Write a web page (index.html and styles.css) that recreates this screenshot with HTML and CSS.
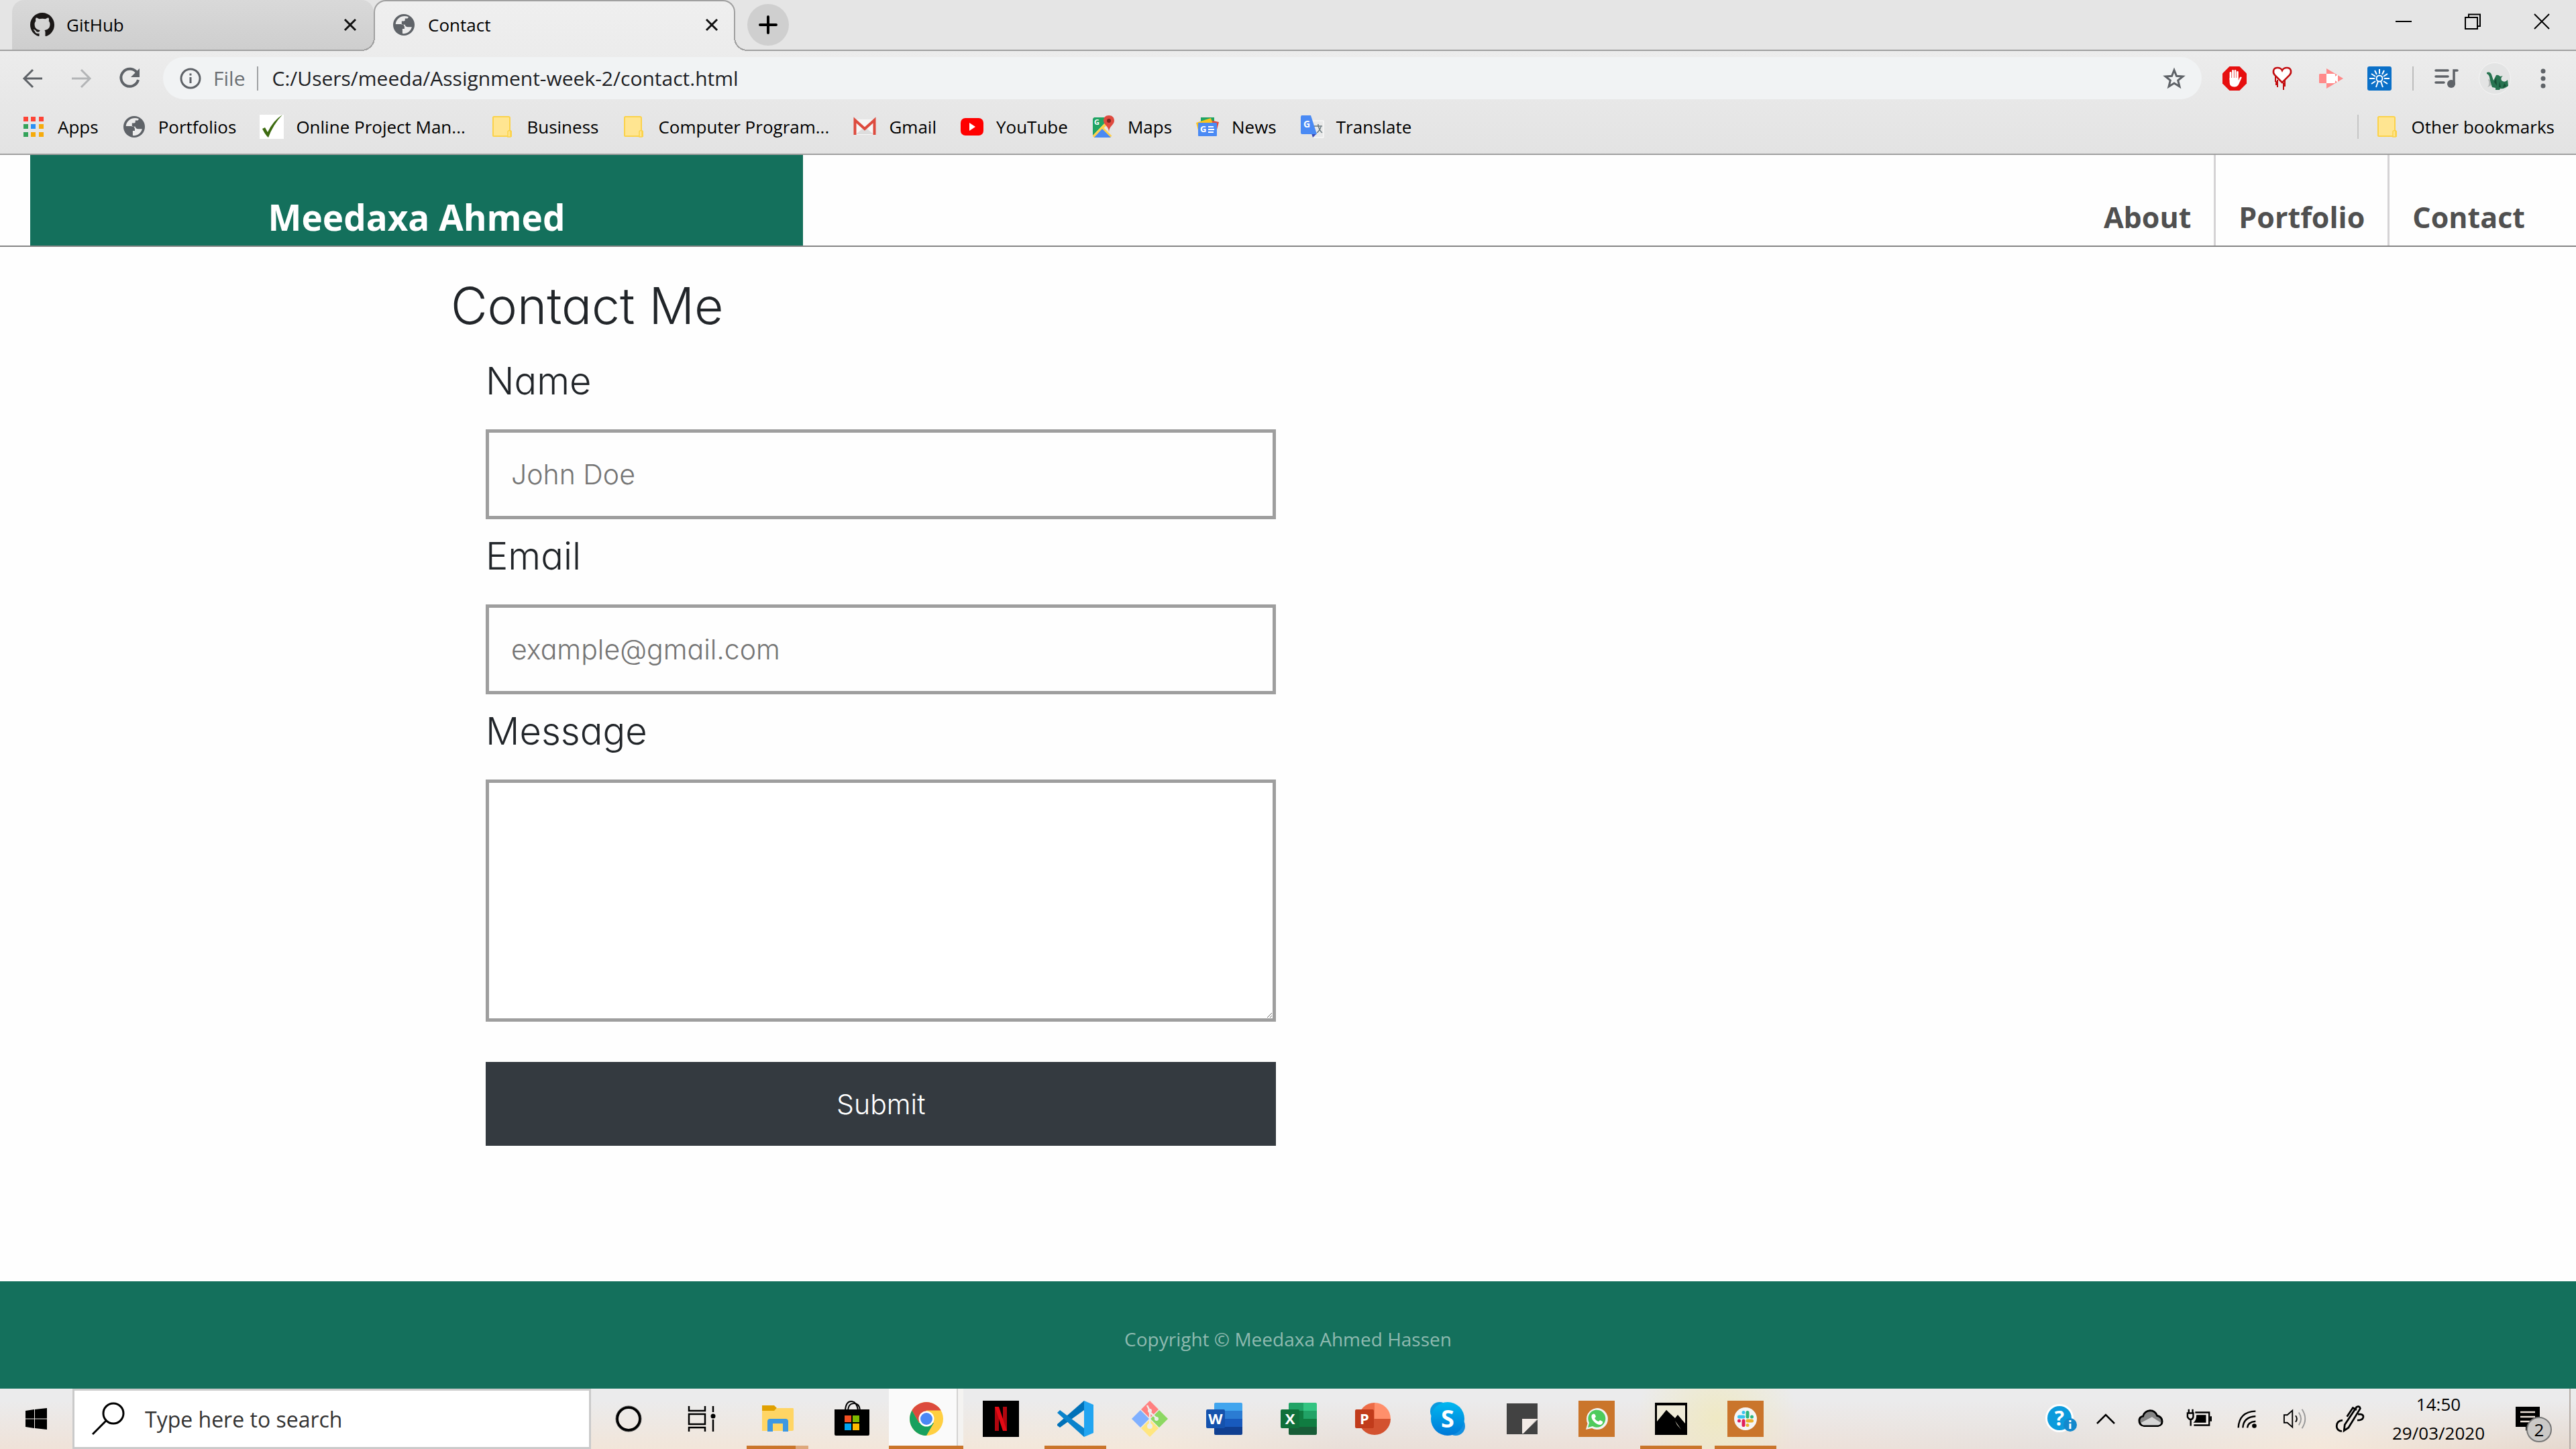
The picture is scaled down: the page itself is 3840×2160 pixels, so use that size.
FILE: index.html
```html
<!DOCTYPE html>
<html lang="en">
<head>
<meta charset="utf-8">
<title>Contact</title>
<link rel="stylesheet" href="styles.css">
</head>
<body>
<svg class="defs" aria-hidden="true">
  <symbol id="globe" viewBox="2 2 20 20"><circle cx="12" cy="12" r="10" fill="#5f6368"/><path fill="#ececec" d="M4.3 11.4h4.9c2.2 0 3.400 1 3.400 2.800v1.500h-1.900v4.500c3.500.6 8-2.200 8.700-6.200h-3.700c-1.500 0-2.600-.8-2.600-2.200H10V8.500h1.900c.9 0 1.200-.5 1.200-1.200V6.100h2.400l.9-1.400C11.500 2.300 4.900 5.200 4.300 11.400z"/></symbol>
  <symbol id="folder" viewBox="0 0 36 36"><path fill="#ffe591" stroke="#fbd24a" stroke-width="2" d="M5 3h22q2 0 2 2v18l2 2v7H5q-1 0-1-1V4z"/><path fill="#ffe591" stroke="#fbd24a" stroke-width="1.500" d="M26 33v-8q2-3 4 0v8z"/></symbol>
  <symbol id="close" viewBox="0 0 20 20"><path stroke="#111" stroke-width="3" d="M2 2l16 16M18 2L2 18"/></symbol>
</svg>

<div class="browser">
  <div class="tabs">
    <div class="tab">
      <svg class="icon" viewBox="0 0 16 16"><path fill="#1b1817" d="M8 0C3.580 0 0 3.580 0 8c0 3.540 2.290 6.530 5.470 7.590.4.070.55-.17.55-.38 0-.19-.01-.82-.01-1.490-2.010.37-2.530-.49-2.690-.94-.09-.23-.48-.94-.82-1.130-.28-.15-.68-.52-.01-.53.63-.01 1.080.58 1.230.82.72 1.210 1.870.87 2.330.66.070-.52.28-.87.51-1.070-1.780-.2-3.640-.89-3.640-3.950 0-.87.31-1.590.82-2.150-.08-.2-.36-1.020.08-2.120 0 0 .67-.21 2.200.82.64-.18 1.320-.27 2-.27s1.360.09 2 .27c1.530-1.040 2.200-.82 2.200-.82.44 1.100.16 1.920.08 2.120.51.56.82 1.270.82 2.150 0 3.070-1.870 3.750-3.650 3.950.29.25.54.73.54 1.480 0 1.070-.01 1.930-.01 2.200 0 .21.15.46.55.38A8.010 8.010 0 0016 8c0-4.420-3.580-8-8-8z"/></svg>
      <span class="tab-title">GitHub</span>
      <button class="tab-close" aria-label="Close GitHub"><svg><use href="#close"/></svg></button>
    </div>
    <div class="tab active">
      <svg class="icon"><use href="#globe" x="2" y="2" width="32" height="32"/></svg>
      <span class="tab-title">Contact</span>
      <button class="tab-close" aria-label="Close Contact"><svg><use href="#close"/></svg></button>
    </div>
    <button class="new-tab" aria-label="New tab"><svg viewBox="0 0 28 28"><path stroke="#000" stroke-width="4" stroke-linecap="round" d="M14 2v24M2 14h24"/></svg></button>
    <div class="window-controls">
      <button aria-label="Minimize"><svg viewBox="0 0 24 24"><path stroke="#000" stroke-width="2" d="M0 12h24"/></svg></button>
      <button aria-label="Restore"><svg viewBox="0 0 24 24"><path fill="none" stroke="#000" stroke-width="2" d="M1 6h18v17H1zM6 6V1.500h17V19h-4"/></svg></button>
      <button aria-label="Close"><svg viewBox="0 0 24 24"><path stroke="#000" stroke-width="2" d="M1 1l22 22M23 1L1 23"/></svg></button>
    </div>
  </div>

  <div class="toolbar">
    <button class="tool" aria-label="Back"><svg viewBox="0 0 36 36"><path fill="none" stroke="#5f6368" stroke-width="3" d="M32 18H5M18 5L5 18l13 13"/></svg></button>
    <button class="tool" aria-label="Forward"><svg viewBox="0 0 36 36"><path fill="none" stroke="#b3b5b7" stroke-width="3" d="M4 18h27M18 5l13 13-13 13"/></svg></button>
    <button class="tool" aria-label="Reload"><svg viewBox="0 0 36 36"><path fill="none" stroke="#5f6368" stroke-width="4" d="M29.500 10A13 13 0 1 0 31 20"/><path fill="#5f6368" d="M33 3v13H20z"/></svg></button>
    <div class="omnibox">
      <svg class="info" viewBox="0 0 32 32"><circle cx="16" cy="16" r="14" fill="none" stroke="#5f6368" stroke-width="3"/><path stroke="#5f6368" stroke-width="3" d="M16 14v9M16 8.500v3"/></svg>
      <label class="scheme" for="url">File</label>
      <input id="url" class="url" type="text" value="C:/Users/meeda/Assignment-week-2/contact.html">
      <button class="star" aria-label="Bookmark this page"><svg viewBox="0 0 34 34"><path fill="none" stroke="#5f6368" stroke-width="3" d="M17 4.500l3.500 8.700 9.500.7-7.300 6 2.300 9.100-8-5-8 5 2.300-9.100-7.300-6 9.500-.7z"/></svg></button>
    </div>
    <button class="tool" aria-label="Ad blocker"><svg viewBox="0 0 36 36"><path fill="#e60f0f" d="M10.500 0h15L36 10.500v15L25.500 36h-15L0 25.500v-15z"/><path fill="none" stroke="#fff" stroke-width="2.800" stroke-linecap="round" d="M12 20V9.500M15.500 18V6.500M19 18V6.300M22.400 18V8.500"/><path fill="#fff" d="M10.600 17h13.200v4l2-4.500q1.500-2 3 0L24.500 26q-2 4.500-7 4.500-6.900 0-6.900-7z"/></svg></button>
    <button class="tool" aria-label="Heart extension"><svg viewBox="0 0 36 36"><path fill="#c20d10" d="M6 15h2v7h2v6H7v-5H6zM9 20h2v11H9zM18 24h2v11h-2zM20 20h2v10h-2z"/><path fill="#fff" stroke="#c20d10" stroke-width="2.600" d="M17 24L6 13C2 8 4 2 10 2q5 0 7 4 2-4 7-4c6 0 8 6 4 11z"/></svg></button>
    <button class="tool" aria-label="Video extension"><svg viewBox="0 0 36 36"><path fill="#ff8a8a" d="M1 11h10V3l25 15-25 15v-8H1q-1 0-1-1V12z"/><path fill="#fff" d="M11 11h12q1 0 1 2v2l4-3v12l-4-3v2q0 2-1 2H11z"/></svg></button>
    <button class="tool" aria-label="Password manager"><svg viewBox="0 0 36 36"><rect width="36" height="36" rx="3" fill="#0a70c8"/><g fill="none" stroke="#fff" stroke-width="2"><circle cx="18" cy="18" r="4.500"/><path d="M16 22l-3 9M20 22l3 9M18 4v7M11 6l3 6M25 6l-3 6M6 11l6 4M30 11l-6 4M3 18h8M33 18h-8M6 26l6-4M30 26l-6-4"/></g></svg></button>
    <span class="divider"></span>
    <button class="tool" aria-label="Media controls"><svg viewBox="0 0 36 36"><path fill="none" stroke="#5f6368" stroke-width="3.500" stroke-linecap="round" d="M2 6h18M2 15h18M2 24h12M29 26V6h5"/><circle cx="25" cy="26" r="6" fill="#5f6368"/></svg></button>
    <button class="tool profile" aria-label="Profile"><svg viewBox="0 0 48 48"><circle cx="24" cy="24" r="23.500" fill="#e3e4e4" stroke="#f5f5f5"/><path fill="#b4b9b7" d="M14 25l3 1 2 8-6 3q4-4 1-12z"/><path fill="#277350" d="M12 15q5-2 7 3l3 9 4-8q3-1 6 2l4-1q-4 3-2 7 5 4 9-1l1 9q-6 5-12 4l-1 2h-6v-3l-5-1q-3-9-4-15-1-4-4-5z"/><path fill="#174f36" d="M23 29l3-6 1 12zM31 28l2 9h-3zM38 31l3 4-5 3z"/></svg></button>
    <button class="tool" aria-label="Menu"><svg viewBox="0 0 36 36" fill="#5f6368"><circle cx="18" cy="7" r="3.500"/><circle cx="18" cy="18" r="3.500"/><circle cx="18" cy="29" r="3.500"/></svg></button>
  </div>

  <nav class="bookmarks" aria-label="Bookmarks">
    <a href="#"><svg class="icon" viewBox="0 0 36 36"><path fill="#fd4436" d="M3 3h7v7H3zM14 3h7v7h-7zM26 3h7v7h-7z"/><path fill="#34a35a" d="M3 14h7v7H3zM3 26h7v7H3z"/><path fill="#2a90f5" d="M14 14h7v7h-7z"/><path fill="#f6ab0c" d="M26 14h7v7h-7zM14 26h7v7h-7zM26 26h7v7h-7z"/></svg>Apps</a>
    <a href="#"><svg class="icon"><use href="#globe" x="2" y="2" width="32" height="32"/></svg>Portfolios</a>
    <a href="#"><svg class="icon" viewBox="0 0 36 36"><path fill="#fff" d="M0 0h36v36H0z"/><path fill="#3d6b10" d="M4 21l4-2 4 7Q20 9 34 0 20 15 13 34q-4-3-9-13z"/></svg><span class="clip">Online Project Man...</span></a>
    <a href="#"><svg class="icon"><use href="#folder"/></svg>Business</a>
    <a href="#"><svg class="icon"><use href="#folder"/></svg><span class="clip">Computer Program...</span></a>
    <a href="#"><svg class="icon" viewBox="0 0 36 36"><path fill="#f6f6f6" d="M4 7h28v23H4z"/><path fill="#ddd" d="M5 29l13-11 13 11z"/><path fill="none" stroke="#dd4b3e" stroke-width="4" d="M3.500 30V8L18 21 32.500 8v22"/></svg>Gmail</a>
    <a href="#"><svg class="icon" viewBox="0 0 36 36"><rect x="1" y="5" width="34" height="26" rx="7" fill="#f00"/><path fill="#fff" d="M14 12l9 6-9 6z"/></svg>YouTube</a>
    <a href="#"><svg class="icon" viewBox="0 0 36 36"><path fill="#e4e4e4" d="M2 4h28v30H2z"/><path fill="#20a463" d="M4 4h24L2 31V6z"/><path fill="none" stroke="#ffd04c" stroke-width="4" d="M3 33L29 6M16 20l13 13"/><path fill="#4a8af4" d="M16 21l13 13H4z"/><path fill="#df4a3f" d="M26 1c-5 0-8 3-8 8 0 6 8 8 8 17 0-9 8-11 8-17 0-5-3-8-8-8z"/><circle cx="26" cy="9" r="3" fill="#7b231e"/><text x="4" y="15" class="glyph" font-size="11" fill="#fff">G</text></svg>Maps</a>
    <a href="#"><svg class="icon" viewBox="0 0 36 36"><path fill="#20a463" d="M8 4h20v12H8z"/><path fill="#df4a3f" d="M22 8l13 3-4 15z"/><path fill="#fcc31e" d="M1 12l22-7 6 18H4z"/><rect x="4" y="12" width="28" height="20" rx="1" fill="#4a8af4"/><text x="7" y="26" class="glyph" font-size="13" fill="#fff">G</text><path stroke="#fff" stroke-width="2" d="M19 18h8M19 22h9M19 26h8"/></svg>News</a>
    <a href="#"><svg class="icon" viewBox="0 0 36 36"><path fill="#e9e9e9" stroke="#fff" d="M14 9h21v25H20z"/><path fill="#3b4bb5" d="M17 28h8l-6 6z"/><path fill="#4a8af4" d="M2 1h14l9 28H3q-2 0-2-2V3z"/><text x="5" y="19" class="glyph" font-size="14" fill="#fff">G</text><path fill="none" stroke="#69787e" stroke-width="1.500" d="M21 17h12M27 14v3q3 8 6 10M31 18q-2 6-6 9"/></svg>Translate</a>
    <a href="#" class="other"><svg class="icon"><use href="#folder"/></svg>Other bookmarks</a>
  </nav>
</div>

<header class="site-header">
  <h1 class="brand">Meedaxa Ahmed</h1>
  <nav class="site-nav">
    <a href="#">About</a>
    <a href="#">Portfolio</a>
    <a href="#">Contact</a>
  </nav>
</header>

<main class="content">
  <h2>Contact Me</h2>
  <form class="contact-form">
    <label for="name">Name</label>
    <input id="name" type="text" placeholder="John Doe">
    <label for="email">Email</label>
    <input id="email" type="email" placeholder="example@gmail.com">
    <label for="message">Message</label>
    <textarea id="message"></textarea>
    <button type="submit" class="submit">Submit</button>
  </form>
</main>

<footer class="site-footer">Copyright © Meedaxa Ahmed Hassen</footer>

<div class="taskbar">
  <button class="start" aria-label="Start"><svg viewBox="0 0 32 32"><path fill="#000" d="M0 4l13-2v13.500H0zM14 2l18-2v15.500H14zM0 16.500h13V30L0 28zM14 16.500h18V32l-18-2z"/></svg></button>
  <div class="search">
    <svg viewBox="0 0 50 50"><circle cx="32" cy="17" r="15" fill="none" stroke="#000" stroke-width="3"/><path stroke="#000" stroke-width="3" d="M21 28L1 48"/></svg>
    <input type="text" aria-label="Search" placeholder="Type here to search">
  </div>
  <div class="apps">
    <button aria-label="Cortana"><svg viewBox="0 0 54 54"><circle cx="27" cy="27" r="17" fill="none" stroke="#000" stroke-width="4"/><circle cx="27" cy="27" r="19" fill="none" stroke="#555" stroke-width="1"/></svg></button>
    <button aria-label="Task view"><svg viewBox="0 0 54 54"><path fill="none" stroke="#000" stroke-width="2.500" d="M6 8v7h24V8M6 20h24v15H6zM6 46v-6h24v6M42 8v9M42 28v18"/><circle cx="42" cy="23" r="3.500"/></svg></button>
    <button class="running stacked" aria-label="File Explorer"><svg viewBox="0 0 54 54"><path fill="#e0a000" d="M4 7h18l4 4-4 5H4z"/><path fill="#ffd564" d="M4 15h18l4-4h24q1 0 1 2v30q0 2-2 2H4z"/><path fill="#3d98e2" d="M12 46V31q0-4 4-4h23q4 0 4 4v15h-8V34H20v12z"/></svg></button>
    <button aria-label="Microsoft Store"><svg viewBox="0 0 54 54"><path fill="none" stroke="#000" stroke-width="2" d="M17 14Q18 1 26 1t10 13M21 14q1-10 9-10t9 10"/><path d="M1 13h52v37q0 2-2 2H3q-2 0-2-2z"/><path fill="#f25022" d="M16 22h10v10H16z"/><path fill="#7fba00" d="M28 22h10v10H28z"/><path fill="#00a4ef" d="M16 34h10v10H16z"/><path fill="#ffb900" d="M28 34h10v10H28z"/></svg></button>
    <button class="running current" aria-label="Google Chrome"><svg viewBox="0 0 54 54"><circle cx="27" cy="27" r="25" fill="#ffcf41"/><path fill="#dc4a3d" d="M5.400 14.500A25 25 0 0 1 48.600 14.500H27L16 33z"/><path fill="#17a05e" d="M5.400 14.500A25 25 0 0 0 27 52l11-19H16z"/><circle cx="27" cy="27" r="11.500" fill="#fff"/><circle cx="27" cy="27" r="9" fill="#4a88f5"/></svg></button>
    <button aria-label="Netflix"><svg viewBox="0 0 54 54"><path d="M0 0h54v54H0z"/><path fill="#b1060f" d="M18 9h6v36h-6zM30 9h6v36h-6z"/><path fill="#e50914" d="M18 9h6l12 36h-6z"/></svg></button>
    <button class="running" aria-label="Visual Studio Code"><svg viewBox="0 0 54 54"><path fill="#0071b8" d="M40 0v14L4 40l-4-3v-2z"/><path fill="#0a83cc" d="M0 18l4-4 36 27v13z"/><path fill="#22a5f1" d="M40 0l14 6v42l-14 6z"/></svg></button>
    <button aria-label="Git"><svg viewBox="0 0 54 54"><path fill="#ff8080" d="M27 0l13 13-13 13-13-13z"/><path fill="#80b0ff" d="M13 14l13 13-13 13L0 27z"/><path fill="#8cd863" d="M41 14l13 13-13 13-13-13z"/><path fill="#ffe680" d="M27 28l13 13-13 13-13-13z"/><path fill="none" stroke="#ededed" stroke-width="2.500" d="M23 7l4 8v26M27 17l11 10"/><g fill="#ededed"><circle cx="27" cy="15" r="3"/><circle cx="37" cy="27" r="3"/><circle cx="27" cy="38" r="4"/></g></svg></button>
    <button aria-label="Word"><svg viewBox="0 0 54 54"><path fill="#41a5ee" d="M14 3h38q2 0 2 2v10H12V5q0-2 2-2z"/><path fill="#2b7cd3" d="M12 15h42v12H12z"/><path fill="#185abd" d="M12 27h42v12H12z"/><path fill="#103f91" d="M12 39h42v10q0 2-2 2H14q-2 0-2-2z"/><rect y="13" width="28" height="28" rx="2" fill="#1552ad"/><text x="14" y="35" class="glyph mid" font-size="22" fill="#fff">W</text></svg></button>
    <button aria-label="Excel"><svg viewBox="0 0 54 54"><path fill="#21a366" d="M14 3h20v12H12V5q0-2 2-2z"/><path fill="#33c481" d="M34 3h18q2 0 2 2v10H34z"/><path fill="#107c41" d="M12 15h22v24H12z"/><path fill="#21a366" d="M34 15h20v12H34z"/><path fill="#107c41" d="M34 27h20v12H34z"/><path fill="#185c37" d="M12 39h42v10q0 2-2 2H14q-2 0-2-2z"/><rect y="13" width="28" height="28" rx="2" fill="#10703a"/><text x="14" y="35" class="glyph mid" font-size="22" fill="#fff">X</text></svg></button>
    <button aria-label="PowerPoint"><svg viewBox="0 0 54 54"><path fill="#ed6c47" d="M29 3v24H5A24 24 0 0 1 29 3z"/><path fill="#ff8f6b" d="M29 3a24 24 0 0 1 24 24H29z"/><path fill="#d35230" d="M5 27h48a24 24 0 0 1-48 0z"/><rect y="13" width="28" height="28" rx="2" fill="#c13b1b"/><text x="14" y="35" class="glyph mid" font-size="22" fill="#fff">P</text></svg></button>
    <button aria-label="Skype"><svg viewBox="0 0 54 54"><defs><linearGradient id="sky" x2="0" y2="1"><stop stop-color="#00b8f0"/><stop offset="1" stop-color="#0078d7"/></linearGradient></defs><circle cx="15" cy="16" r="14" fill="#0a9ade"/><circle cx="39" cy="38" r="14" fill="#1590e0"/><circle cx="27" cy="27" r="25" fill="url(#sky)"/><text x="27" y="40" class="glyph mid" font-size="36" fill="#fff">S</text></svg></button>
    <button aria-label="Sticky Notes"><svg viewBox="0 0 54 54"><path fill="#424242" d="M4 4h46v23L29 50H4z"/><path fill="#f2eae5" d="M27 27h23L29 49h-2z"/><path fill="#424242" d="M50 28v22H28z"/></svg></button>
    <button aria-label="WhatsApp"><svg viewBox="0 0 54 54"><path fill="#ca752b" d="M0 0h54v54H0z"/><path fill="#f3f3f3" d="M11 43l2.500-9A16 16 0 1 1 20 41z"/><path fill="#4ecb5c" d="M14 40l2-7a13 13 0 1 1 5 5z"/><path fill="#fff" d="M20 21q3-3 5 0l1 3-2 2q2 4 6 5l2-2 4 2q1 3-3 5-6 0-11-6-4-5-2-9z"/></svg></button>
    <button class="running" aria-label="Photos"><svg viewBox="0 0 54 54"><path d="M3 3h48v48H3z"/><path fill="#eeead7" d="M6 7h42v27L37 21l-4 5-13-12L6 31z"/><path d="M6 33l14-19 15 19zM33 27l4-5 12 14H37z"/><path fill="#eee8d6" d="M33 30l9 13-6-7z"/></svg></button>
    <button class="running" aria-label="Slack"><svg viewBox="0 0 54 54"><path fill="#ca752b" d="M0 0h54v54H0z"/><circle cx="27" cy="27" r="17" fill="#f5f5f5"/><g stroke-width="5" stroke-linecap="round"><path stroke="#36c5f0" d="M24 17.500v.1M17.500 24H24"/><path stroke="#2eb67d" d="M30 17.500V24M36.500 24v.1"/><path stroke="#ecb22e" d="M30 30h6.500M30 36.500v.1"/><path stroke="#e01e5a" d="M24 30v6.500M17.500 30v.1"/></g></svg></button>
  </div>
  <div class="tray">
    <button class="help" aria-label="Help"><svg viewBox="0 0 48 48"><circle cx="22" cy="23" r="21" fill="#fff"/><circle cx="22" cy="23" r="18" fill="#0c9bdc"/><text x="22" y="34" class="glyph mid" font-size="30" fill="#fff">?</text><circle cx="38" cy="33" r="10" fill="#1488cc"/><path stroke="#fff" stroke-width="3" d="M38 31v8M38 26v3"/></svg></button>
    <button class="chevron" aria-label="Show hidden icons"><svg viewBox="0 0 36 36"><path fill="none" stroke="#000" stroke-width="2.500" d="M5 25l13-13 13 13"/></svg></button>
    <button aria-label="OneDrive"><svg viewBox="0 0 40 40"><path fill="#858585" stroke="#000" stroke-width="3" d="M9 31q-7-1-7-8 0-6 6-7 2-8 11-9 8 0 11 8 8 2 8 9 0 6-6 7z"/><path fill="#d6d6d6" d="M5 26l17-9 14 9q-1 4-5 4H9q-3 0-4-4z"/></svg></button>
    <button aria-label="Battery"><svg viewBox="0 0 40 40"><path fill="none" stroke="#000" stroke-width="2.500" d="M14 10h22v20H12M4 5v6M10 5v6M2 11h9v6q-1 4-4 4t-5-4zM7 21v10"/><path d="M16 14h15v12H11q5-3 5-12zM37 16h3v8h-3z"/></svg></button>
    <button aria-label="Wi-Fi"><svg viewBox="0 0 40 40"><path fill="none" stroke="#000" stroke-width="2.500" d="M6 34Q7 9 33 8M13 34q1-17 20-18M20 34q1-9 13-10"/><circle cx="31" cy="31" r="3.500"/></svg></button>
    <button aria-label="Volume"><svg viewBox="0 0 40 40"><path fill="none" stroke="#000" stroke-width="2" d="M2 14h5l8-7v26l-8-7H2zM20 15q4 5 0 10"/><path fill="none" stroke="#999" stroke-width="2" d="M25 10q7 10 0 20M30 5q10 15 0 30"/></svg></button>
    <button class="pen" aria-label="Windows Ink"><svg viewBox="0 0 40 40"><path fill="none" stroke="#000" stroke-width="2.500" d="M12 36l1-8L29 4q4-2 5 2L18 32zM16 17l8-12 5 3M31 14q8-1 7 4-1 4-8 4M10 22q-8 1-8 8 0 6 7 7"/></svg></button>
    <time class="clock"><span>14:50</span><span>29/03/2020</span></time>
    <button class="notifications" aria-label="2 notifications"><svg viewBox="0 0 36 36"><path d="M0 0h36v30H21l-6 6v-6H0z"/><path stroke="#eadfd6" stroke-width="2.500" d="M7 8h22M7 15h22M7 22h14"/></svg><span class="badge">2</span></button>
  </div>
</div>
</body>
</html>
```
FILE: styles.css
```css
* { box-sizing: border-box; }

body {
  margin: 0;
  min-height: 100vh;
  display: flex;
  flex-direction: column;
  background: #fefefe;
  font-family: "Open Sans", "Noto Sans", sans-serif;
  font-size: 26px;
  color: #000;
}

button {
  border: 0;
  padding: 0;
  background: none;
  font: inherit;
  display: flex;
  align-items: center;
  justify-content: center;
}

input, textarea {
  border: 0;
  padding: 0;
  background: none;
  font: inherit;
  border-radius: 0;
}

a { color: inherit; text-decoration: none; }
svg { display: block; flex: none; }
.defs { position: absolute; width: 0; height: 0; }
.icon { width: 36px; height: 36px; }
.glyph { font-family: "Open Sans", sans-serif; font-weight: 700; }
.mid { text-anchor: middle; }

/* Browser window */
.browser { background: linear-gradient(#e5e5e5 0 76px, #ececec 76px, #e3e3e3); border-bottom: 2px solid #9f9f9f; }

.tabs {
  display: flex;
  height: 76px;
  padding-left: 18px;
  border-bottom: 2px solid #a0a0a0;
}
.tab {
  width: 539px;
  height: 74px;
  display: flex;
  align-items: center;
  gap: 18px;
  padding: 0 25px 0 27px;
  border-radius: 18px 18px 0 0;
  background: linear-gradient(#d9d9d9, #cecece);
}
.tab.active {
  position: relative;
  height: 76px;
  padding: 0 23px 4px 25px;
  background: linear-gradient(#efefef, #ececec);
  border: 2px solid #a0a0a0;
  border-bottom: 0;
}
/* Curved feet that join the active tab to the toolbar */
.tab.active::before,
.tab.active::after {
  content: "";
  position: absolute;
  bottom: 0;
  width: 20px;
  height: 20px;
}
.tab.active::before {
  left: -20px;
  background: radial-gradient(circle at 0 0, transparent 18px, #a0a0a0 18px 20px, #ececec 20px);
}
.tab.active::after {
  right: -20px;
  background: radial-gradient(circle at 100% 0, transparent 18px, #a0a0a0 18px 20px, #ececec 20px);
}
.tab-title { flex: 1; }
.tab-close svg { width: 20px; height: 20px; }
.new-tab {
  width: 62px;
  height: 62px;
  margin: 6px 0 0 18px;
  border-radius: 50%;
  background: #cfcfcf;
}
.new-tab svg { width: 28px; height: 28px; }
.window-controls { margin-left: auto; display: flex; height: 64px; }
.window-controls button { width: 103px; }
.window-controls svg { width: 24px; height: 24px; }

.toolbar { display: flex; align-items: center; height: 81px; padding: 0 13px; }
.tool { width: 72px; height: 63px; }
.tool svg { width: 36px; height: 36px; }
.tool.profile svg { width: 48px; height: 48px; }
.divider { width: 2px; height: 36px; margin: 0 13px; background: #bdbdbd; }
.omnibox {
  flex: 1;
  display: flex;
  align-items: center;
  height: 63px;
  margin: 0 13px 0 14px;
  padding: 0 24px 0 25px;
  border-radius: 32px;
  background: #f1f3f4;
  font-size: 30px;
}
.info { width: 32px; height: 32px; }
.scheme { margin-left: 18px; padding-right: 18px; border-right: 2px solid #9fa1a3; line-height: 36px; color: #6c7074; }
.url { flex: 1; height: 60px; margin-left: 20px; color: #202124; }
.star svg { width: 34px; height: 34px; }

.bookmarks { display: flex; align-items: center; gap: 35px; height: 72px; padding: 0 32px 8px; }
.bookmarks a { display: flex; align-items: center; gap: 18px; white-space: nowrap; }
.clip { width: 255px; }
.bookmarks .other { margin-left: auto; padding-left: 25px; border-left: 2px solid #c6c6c6; }

/* Web page */
.site-header {
  display: flex;
  justify-content: space-between;
  height: 137px;
  padding: 0 42px 0 45px;
  border-bottom: 2px solid #858585;
  font-weight: 700;
}
.brand {
  width: 30vw;
  margin: 0;
  padding-top: 51px;
  background: #14705c;
  color: #fff;
  font-size: 53px;
  line-height: 84px;
  text-align: center;
}
.site-nav { display: flex; font-size: 43px; line-height: 84px; color: #505050; }
.site-nav a { padding: 51px 34px 0; }
.site-nav a + a { border-left: 3px solid #d5d3d5; }

.content {
  flex: 1;
  padding: 45px 0 0 17.5%;
  font-family: Inter, "Open Sans", sans-serif;
  font-feature-settings: "cv11";
  font-weight: 350;
  color: #212529;
}
.content h2 { margin: 0 0 37px; font-size: 75px; font-weight: 350; line-height: 86px; }
.contact-form { display: flex; flex-direction: column; width: 37.2%; margin-left: 52px; }
.contact-form label { margin-bottom: 40px; font-size: 56px; line-height: 64px; }
.contact-form input {
  height: 134px;
  margin-bottom: 23px;
  padding: 0 33px;
  border: 5px solid #9e9e9e;
  font-size: 41px;
  font-weight: 300;
  font-feature-settings: inherit;
}
.contact-form input::placeholder { color: #757575; }
.contact-form textarea { height: 361px; border: 5px solid #9e9e9e; background: #fff; }
.submit { height: 125px; margin-top: 60px; background: #343a40; color: #fff; font-size: 41px; }

.site-footer {
  padding: 64px 0 52px;
  background: #14705c;
  color: #8fbab0;
  font-size: 28px;
  line-height: 44px;
  text-align: center;
}

/* Taskbar */
.taskbar {
  display: flex;
  height: 90px;
  background:
    radial-gradient(ellipse 120px 110px at 2560px 45px, #efe9c4, transparent),
    linear-gradient(#ebebec 20%, transparent),
    linear-gradient(90deg, #efe2d8, #f4e8da 45%, #e9dfd8 52%, #efe1d8 68%, #e6e0dc 80%, #f5e8da 90%, #e5d8ce);
}
.start { width: 108px; }
.start svg { width: 32px; height: 32px; }
.search {
  display: flex;
  align-items: center;
  gap: 29px;
  width: 773px;
  padding-left: 26px;
  background: #fff;
  border: 3px solid #cacaca;
}
.search svg { width: 50px; height: 50px; }
.search input { flex: 1; height: 60px; font-size: 32px; }
.search input::placeholder { color: #333; opacity: 1; }
.apps { display: flex; }
.apps button { width: 111px; }
.apps svg { width: 54px; height: 54px; }
.running { background: linear-gradient(#ca752b, #ca752b) center bottom / 92px 5px no-repeat; }
.running.stacked { background: linear-gradient(90deg, #ca752b 73px, #dea87c 73px) center bottom / 92px 5px no-repeat; }
.running.current { background: linear-gradient(#ca752b, #ca752b) center bottom / 111px 5px no-repeat, linear-gradient(90deg, #fafafa 101px, #d4d3d2 101px 103px, #f4f3f1 103px); }

.tray { display: flex; margin-left: auto; padding-right: 8px; }
.tray button { width: 72px; }
.tray svg { width: 38px; height: 38px; }
.tray .help svg { width: 48px; height: 48px; }
.tray .chevron { width: 62px; }
.tray .chevron svg { width: 36px; height: 36px; }
.tray .pen { width: 90px; }
.tray .pen svg { width: 44px; height: 60px; }
.clock { display: flex; flex-direction: column; justify-content: center; width: 174px; line-height: 43px; text-align: center; }
.tray .notifications { position: relative; width: 110px; padding-right: 16px; border-right: 2px solid #b5aca6; }
.tray .notifications svg { width: 36px; height: 36px; }
.badge {
  position: absolute;
  right: 26px;
  bottom: 10px;
  width: 38px;
  height: 38px;
  border: 2px solid #777;
  border-radius: 50%;
  background: #cbc9c7;
  line-height: 34px;
}
```
